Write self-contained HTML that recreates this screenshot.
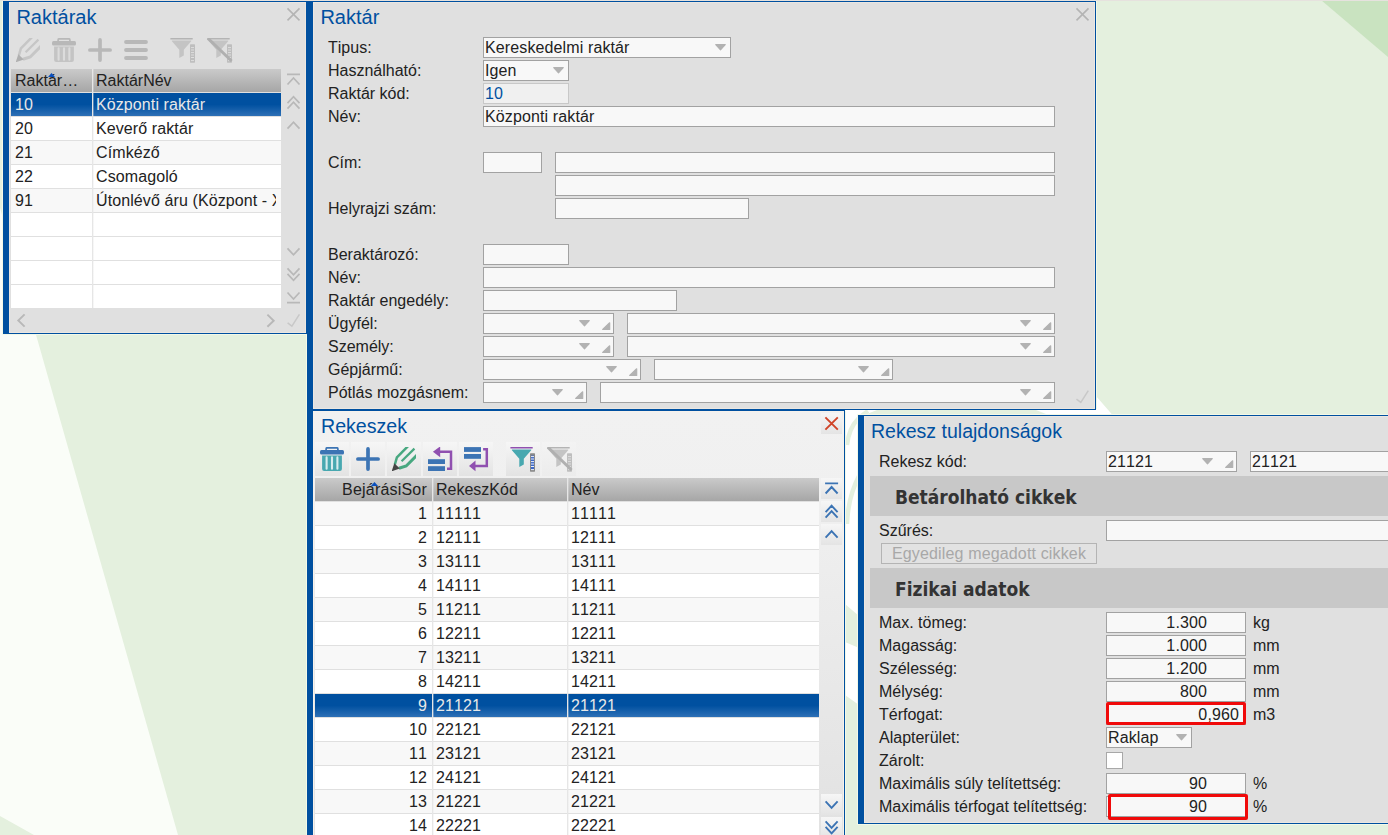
<!DOCTYPE html><html lang="hu"><head><meta charset="utf-8"><title>Raktárak</title><style>
*{box-sizing:border-box;margin:0;padding:0}
html,body{width:1388px;height:835px;overflow:hidden}
body{position:relative;background:#e4f0de;font-family:"Liberation Sans",sans-serif;font-size:16px;color:#222;font-kerning:none;font-feature-settings:"kern" 0,"liga" 0}
.abs{position:absolute}
.panel{position:absolute;background:#e0e0e0;border-left:6px solid #0050a0;border-top:1px solid #0050a0;border-right:1px solid #0050a0;border-bottom:1px solid #0050a0;overflow:hidden}
.panel{box-shadow:inset 0 0 0 1px #ebe7e2}
.panel.act{background:linear-gradient(#f1f1f1,#f0f0f0 20%,#e2e2e2 96%);box-shadow:inset 0 0 0 1px #f7f2ec}
.title{position:absolute;color:#0050a0;font-size:20px;white-space:nowrap;line-height:22px;transform-origin:0 0}
.lbl{position:absolute;white-space:nowrap;line-height:21px;height:21px;font-size:16px;color:#222;font-kerning:none;font-feature-settings:"kern" 0,"liga" 0}
.fld{position:absolute;height:21px;border:1px solid #a2a2a2;background:#f8f8f8;line-height:19px;font-size:16px;padding-left:1px;letter-spacing:.12px;white-space:nowrap;overflow:hidden;color:#222}
.fld.ro{background:#f0f0f0;border-color:#c8c8c8;color:#0050a0}
.fld.num{text-align:right;padding-right:4px}
.fld svg{left:auto;overflow:visible}
.grid{position:absolute;overflow:hidden;background:#fff}
.gh{position:absolute;top:0;height:23px;background:linear-gradient(#cacaca,#a6a6a6);line-height:24px;font-size:16px;white-space:nowrap;overflow:hidden;color:#222}
.row{position:absolute;left:0;right:0;height:24px;border-top:1px solid #e0e0e0;background:#fff}
.row.alt{background:#f8f8f8}
.row.sel{background:linear-gradient(#0050a0 50%,#2e70b6);color:#e8e8e8}
.cell{position:absolute;top:0;height:23px;line-height:23px;white-space:nowrap;overflow:hidden;font-size:16px;letter-spacing:.1px}
.vsep{position:absolute;top:0;bottom:0;width:2px;background:linear-gradient(to right,#e6e6e6 50%,rgba(230,230,230,.35) 50%)}
.tb{position:absolute;width:34px;height:34px;background:linear-gradient(#f6f6f6,#e3e3e3)}
.sec{position:absolute;background:#c8c8c8;height:40px;overflow:hidden;font-family:"DejaVu Sans Condensed","DejaVu Sans","Liberation Sans",sans-serif;font-stretch:condensed;font-weight:bold;font-size:19px;line-height:43px;padding-left:25px;color:#333;white-space:nowrap}
svg{position:absolute;overflow:visible}
</style></head><body>
<svg class="abs" style="left:0;top:0" width="1388" height="835" viewBox="0 0 1388 835"><rect width="1388" height="835" fill="#e4f0de"/><polygon points="-59,0 178,835 34,835 0,816 0,0" fill="#fafdf8"/><polygon points="1321,0 1388,0 1388,57" fill="#c9e3c0"/><polygon points="845,410 1096,410 1096,396 1112.5,415 859,415 859,705 845,695" fill="#fff"/><polygon points="862,416 877,410 1036,410 1051,416" fill="#e4f0de"/><path d="M847,445 Q849,428 858,419 Q862,415 868,411" stroke="#e4f0de" stroke-width="4.5" fill="none"/><path d="M847,524 Q848,496 860,474" stroke="#e4f0de" stroke-width="4.5" fill="none"/><polygon points="845,604 859,616 859,648 845,642" fill="#e4f0de"/><path d="M2.5,1 V334.5 H306.5 V835 M1096.5,1 V409 M845.5,411 V835 M1388,414.5 H857.5 V824.5 H1388" fill="none" stroke="#f3f9e8" stroke-width="1"/><rect x="0" y="0" width="1388" height="1" fill="#e6e2de"/></svg>
<div class="panel" style="left:3px;top:1px;width:304px;height:333px">
<div class="title" style="left:7.4px;top:4px">Raktárak</div>
<svg style="left:0;top:0" width="10" height="10"><path d="M278.5,6.4 L290.5,18.4 M290.5,6.4 L278.5,18.4" stroke="#b4b4b4" stroke-width="1.6"/></svg>
<svg style="left:7px;top:36px;overflow:hidden" width="24" height="24" viewBox="0 0 24 24"><path d="M16.6,-1.4 L4.9,10.3 L2.8,17.6" fill="none" stroke="#c6c6c6" stroke-width="2.5"/><path d="M22.4,1.6 L9.6,14.3" stroke="#c6c6c6" stroke-width="2.2"/><path d="M26,7.2 L14.2,19 L7,21.2" fill="none" stroke="#c6c6c6" stroke-width="3"/><polygon points="2.3,16.2 7.8,21.6 -0.3,24.3" fill="#b0b0b0"/></svg>
<svg style="left:43px;top:36px;overflow:hidden" width="24" height="24" viewBox="0 0 24 24"><path d="M6.1,4 V1.9 Q6.1,0.8 7.2,0.8 H16.8 Q17.9,0.8 17.9,1.9 V4" fill="none" stroke="#b8b8b8" stroke-width="1.7"/><rect x="0" y="3.1" width="24" height="4.4" rx="1.5" fill="#b8b8b8"/><path d="M2.1,8.4 H21.9 V22 Q21.9,24 19.9,24 H4.1 Q2.1,24 2.1,22 Z" fill="#c4c4c4"/><path d="M6.6,10.4 V21.8 M12,10.4 V21.8 M17.4,10.4 V21.8" stroke="#dcdcdc" stroke-width="2.1" stroke-linecap="round"/></svg>
<svg style="left:79px;top:36px;overflow:hidden" width="24" height="24" viewBox="0 0 24 24"><path d="M12,1.9 V22.1 M1.9,12 H22.1" stroke="#b8b8b8" stroke-width="3.7" stroke-linecap="round"/></svg>
<svg style="left:115px;top:36px;overflow:hidden" width="24" height="24" viewBox="0 0 24 24"><path d="M2,4 H22 M2,12 H22 M2,20 H22" stroke="#b8b8b8" stroke-width="3.8" stroke-linecap="round"/></svg>
<svg style="left:161px;top:36px;overflow:hidden" width="26" height="26" viewBox="0 0 26 26"><rect x="0.4" y="-0.2" width="22.3" height="1.7" fill="#b4b4b4"/><path d="M1.7,3 Q1.5,2.4 2.4,2.4 H20.8 Q21.7,2.4 21.4,3 L13.8,11.8 V17.6 L9.3,19.9 V11.8 Z" fill="#c4c4c4"/><rect x="20" y="6.3" width="5" height="18.4" rx="0.6" fill="#bebebe"/><path d="M21,9.6 h3 M21,12 h3 M21,14.6 h3 M21,17 h3 M21,19.5 h3 M21,22.6 h3" stroke="#e2e2e2" stroke-width="0.9"/></svg>
<svg style="left:197.5px;top:36px;overflow:hidden" width="26" height="26" viewBox="0 0 26 26"><rect x="0.4" y="-0.2" width="22.3" height="1.7" fill="#b4b4b4"/><path d="M1.7,3 Q1.5,2.4 2.4,2.4 H20.8 Q21.7,2.4 21.4,3 L13.8,11.8 V17.6 L9.3,19.9 V11.8 Z" fill="#c4c4c4"/><rect x="20" y="6.3" width="5" height="18.4" rx="0.6" fill="#bebebe"/><path d="M21,9.6 h3 M21,12 h3 M21,14.6 h3 M21,17 h3 M21,19.5 h3 M21,22.6 h3" stroke="#e2e2e2" stroke-width="0.9"/><path d="M0.8,0.2 L24.6,23" stroke="#b0b0b0" stroke-width="3"/></svg>
<div class="grid" style="left:2px;top:67px;width:270px;height:239px">
<div class="gh" style="left:0;width:81px;padding-left:4px">Raktár…</div>
<div class="gh" style="left:81px;width:189px;padding-left:4px">RaktárNév</div>
<svg style="left:37px;top:4px" width="7" height="4"><polygon points="0,4 3.5,0 7,4" fill="#0a50c0"/></svg>
<div class="row sel" style="top:23px"><div class="cell" style="left:4px;width:76px">10</div><div class="cell" style="left:85px;width:180px">Központi raktár</div></div>
<div class="row" style="top:47px"><div class="cell" style="left:4px;width:76px">20</div><div class="cell" style="left:85px;width:180px">Keverő raktár</div></div>
<div class="row alt" style="top:71px"><div class="cell" style="left:4px;width:76px">21</div><div class="cell" style="left:85px;width:180px">Címkéző</div></div>
<div class="row" style="top:95px"><div class="cell" style="left:4px;width:76px">22</div><div class="cell" style="left:85px;width:180px">Csomagoló</div></div>
<div class="row alt" style="top:119px"><div class="cell" style="left:4px;width:76px">91</div><div class="cell" style="left:85px;width:180px">Útonlévő áru (Központ - X</div></div>
<div class="row" style="top:143px"><div class="cell" style="left:4px;width:76px"></div><div class="cell" style="left:85px;width:180px"></div></div>
<div class="row" style="top:167px"><div class="cell" style="left:4px;width:76px"></div><div class="cell" style="left:85px;width:180px"></div></div>
<div class="row" style="top:191px"><div class="cell" style="left:4px;width:76px"></div><div class="cell" style="left:85px;width:180px"></div></div>
<div class="row" style="top:215px"><div class="cell" style="left:4px;width:76px"></div><div class="cell" style="left:85px;width:180px"></div></div>
<div class="vsep" style="left:81px;top:0"></div>
</div>
<svg style="left:0;top:0" width="10" height="10"><path d="M278,72.4 H291 M278.5,82.5 L284.5,76 L290.5,82.5 M278.5,101.2 L284.5,94.7 L290.5,101.2 M278.5,106.7 L284.5,100.2 L290.5,106.7 M278.5,126.7 L284.5,120.2 L290.5,126.7 M278.5,246.3 L284.5,252.8 L290.5,246.3 M278.5,266.3 L284.5,272.8 L290.5,266.3 M278.5,271.8 L284.5,278.3 L290.5,271.8 M278.5,290.5 L284.5,297 L290.5,290.5 M278,300.6 H291 " fill="none" stroke="#b8b8b8" stroke-width="1.7"/></svg>
<svg style="left:0;top:0" width="10" height="10"><path d="M278.6,320.9 L282.9,324.2 L290.4,312.4" fill="none" stroke="#c8c8c8" stroke-width="1.5"/></svg>
<svg style="left:0;top:0" width="10" height="10"><path d="M15.6,312.4 l-6.3,6.1 l6.3,6.1 M258.4,312.6 l6.3,6.1 l-6.3,6.1" fill="none" stroke="#b8b8b8" stroke-width="1.9"/></svg>
</div>
<div class="panel" style="left:307px;top:1px;width:789px;height:409px">
<div class="title" style="left:7.4px;top:4px">Raktár</div>
<svg style="left:0;top:0" width="10" height="10"><path d="M763.5,6.4 L775.5,18.4 M775.5,6.4 L763.5,18.4" stroke="#b4b4b4" stroke-width="1.6"/></svg>
<div class="lbl" style="left:15px;top:35px">Tipus:</div>
<div class="lbl" style="left:15px;top:58px">Használható:</div>
<div class="lbl" style="left:15px;top:81px">Raktár kód:</div>
<div class="lbl" style="left:15px;top:104px">Név:</div>
<div class="lbl" style="left:15px;top:150px">Cím:</div>
<div class="lbl" style="left:15px;top:196px">Helyrajzi szám:</div>
<div class="lbl" style="left:15px;top:242px">Beraktározó:</div>
<div class="lbl" style="left:15px;top:265px">Név:</div>
<div class="lbl" style="left:15px;top:288px">Raktár engedély:</div>
<div class="lbl" style="left:15px;top:311px">Ügyfél:</div>
<div class="lbl" style="left:15px;top:334px">Személy:</div>
<div class="lbl" style="left:15px;top:357px">Gépjármű:</div>
<div class="lbl" style="left:15px;top:380px">Pótlás mozgásnem:</div>
<div class="fld dd" style="left:170px;top:35px;width:248px">Kereskedelmi raktár<svg style="right:4px;top:6.3px" width="11" height="7" viewBox="0 0 11 7"><polygon points="0.7,0.6 10.3,0.6 5.5,5.9" fill="#b2b2b2" stroke="#b2b2b2" stroke-width="1.1" stroke-linejoin="round"/></svg></div>
<div class="fld dd" style="left:170px;top:58px;width:86px">Igen<svg style="right:4px;top:6.3px" width="11" height="7" viewBox="0 0 11 7"><polygon points="0.7,0.6 10.3,0.6 5.5,5.9" fill="#b2b2b2" stroke="#b2b2b2" stroke-width="1.1" stroke-linejoin="round"/></svg></div>
<div class="fld ro" style="left:170px;top:81px;width:86px">10</div>
<div class="fld " style="left:170px;top:104px;width:572px">Központi raktár</div>
<div class="fld " style="left:170px;top:150px;width:59px"></div>
<div class="fld " style="left:242px;top:150px;width:500px"></div>
<div class="fld " style="left:242px;top:173px;width:500px"></div>
<div class="fld " style="left:242px;top:196px;width:194px"></div>
<div class="fld " style="left:170px;top:242px;width:86px"></div>
<div class="fld " style="left:170px;top:265px;width:572px"></div>
<div class="fld " style="left:170px;top:288px;width:194px"></div>
<div class="fld dd dd2" style="left:170px;top:311px;width:131px"><svg style="right:23px;top:6.3px" width="11" height="7" viewBox="0 0 11 7"><polygon points="0.7,0.6 10.3,0.6 5.5,5.9" fill="#b2b2b2" stroke="#b2b2b2" stroke-width="1.1" stroke-linejoin="round"/></svg><svg style="right:3px;top:7.8px" width="8.4" height="8.2" viewBox="0 0 8.4 8.2"><polygon points="0.7,7.5 7.7,7.5 7.7,0.8" fill="#b2b2b2" stroke="#b2b2b2" stroke-width="1.2" stroke-linejoin="round"/></svg></div>
<div class="fld dd dd2" style="left:314px;top:311px;width:428px"><svg style="right:23px;top:6.3px" width="11" height="7" viewBox="0 0 11 7"><polygon points="0.7,0.6 10.3,0.6 5.5,5.9" fill="#b2b2b2" stroke="#b2b2b2" stroke-width="1.1" stroke-linejoin="round"/></svg><svg style="right:3px;top:7.8px" width="8.4" height="8.2" viewBox="0 0 8.4 8.2"><polygon points="0.7,7.5 7.7,7.5 7.7,0.8" fill="#b2b2b2" stroke="#b2b2b2" stroke-width="1.2" stroke-linejoin="round"/></svg></div>
<div class="fld dd dd2" style="left:170px;top:334px;width:131px"><svg style="right:23px;top:6.3px" width="11" height="7" viewBox="0 0 11 7"><polygon points="0.7,0.6 10.3,0.6 5.5,5.9" fill="#b2b2b2" stroke="#b2b2b2" stroke-width="1.1" stroke-linejoin="round"/></svg><svg style="right:3px;top:7.8px" width="8.4" height="8.2" viewBox="0 0 8.4 8.2"><polygon points="0.7,7.5 7.7,7.5 7.7,0.8" fill="#b2b2b2" stroke="#b2b2b2" stroke-width="1.2" stroke-linejoin="round"/></svg></div>
<div class="fld dd dd2" style="left:314px;top:334px;width:428px"><svg style="right:23px;top:6.3px" width="11" height="7" viewBox="0 0 11 7"><polygon points="0.7,0.6 10.3,0.6 5.5,5.9" fill="#b2b2b2" stroke="#b2b2b2" stroke-width="1.1" stroke-linejoin="round"/></svg><svg style="right:3px;top:7.8px" width="8.4" height="8.2" viewBox="0 0 8.4 8.2"><polygon points="0.7,7.5 7.7,7.5 7.7,0.8" fill="#b2b2b2" stroke="#b2b2b2" stroke-width="1.2" stroke-linejoin="round"/></svg></div>
<div class="fld dd dd2" style="left:170px;top:357px;width:158px"><svg style="right:23px;top:6.3px" width="11" height="7" viewBox="0 0 11 7"><polygon points="0.7,0.6 10.3,0.6 5.5,5.9" fill="#b2b2b2" stroke="#b2b2b2" stroke-width="1.1" stroke-linejoin="round"/></svg><svg style="right:3px;top:7.8px" width="8.4" height="8.2" viewBox="0 0 8.4 8.2"><polygon points="0.7,7.5 7.7,7.5 7.7,0.8" fill="#b2b2b2" stroke="#b2b2b2" stroke-width="1.2" stroke-linejoin="round"/></svg></div>
<div class="fld dd dd2" style="left:341px;top:357px;width:239px"><svg style="right:23px;top:6.3px" width="11" height="7" viewBox="0 0 11 7"><polygon points="0.7,0.6 10.3,0.6 5.5,5.9" fill="#b2b2b2" stroke="#b2b2b2" stroke-width="1.1" stroke-linejoin="round"/></svg><svg style="right:3px;top:7.8px" width="8.4" height="8.2" viewBox="0 0 8.4 8.2"><polygon points="0.7,7.5 7.7,7.5 7.7,0.8" fill="#b2b2b2" stroke="#b2b2b2" stroke-width="1.2" stroke-linejoin="round"/></svg></div>
<div class="fld dd dd2" style="left:170px;top:380px;width:104px"><svg style="right:23px;top:6.3px" width="11" height="7" viewBox="0 0 11 7"><polygon points="0.7,0.6 10.3,0.6 5.5,5.9" fill="#b2b2b2" stroke="#b2b2b2" stroke-width="1.1" stroke-linejoin="round"/></svg><svg style="right:3px;top:7.8px" width="8.4" height="8.2" viewBox="0 0 8.4 8.2"><polygon points="0.7,7.5 7.7,7.5 7.7,0.8" fill="#b2b2b2" stroke="#b2b2b2" stroke-width="1.2" stroke-linejoin="round"/></svg></div>
<div class="fld dd dd2" style="left:287px;top:380px;width:455px"><svg style="right:23px;top:6.3px" width="11" height="7" viewBox="0 0 11 7"><polygon points="0.7,0.6 10.3,0.6 5.5,5.9" fill="#b2b2b2" stroke="#b2b2b2" stroke-width="1.1" stroke-linejoin="round"/></svg><svg style="right:3px;top:7.8px" width="8.4" height="8.2" viewBox="0 0 8.4 8.2"><polygon points="0.7,7.5 7.7,7.5 7.7,0.8" fill="#b2b2b2" stroke="#b2b2b2" stroke-width="1.2" stroke-linejoin="round"/></svg></div>
<svg style="left:0;top:0" width="10" height="10"><path d="M763.5,397.1 L767.8,400.4 L775.3,388.6" fill="none" stroke="#c8c8c8" stroke-width="1.5"/></svg>
</div>
<div class="panel act" style="left:307px;top:410px;width:538px;height:440px">
<div class="title" style="left:7.6px;top:4px;transform:scaleX(.98)">Rekeszek</div>
<div class="abs" style="left:508px;top:2px;width:21px;height:21px;background:linear-gradient(#f6f6f6,#e4e4e4)"></div>
<svg style="left:0;top:0" width="10" height="10"><path d="M512.4,6.3 L524.8,18.7 M524.8,6.3 L512.4,18.7" stroke="#d04428" stroke-width="1.9"/></svg>
<div class="tb" style="left:2px;top:31px"></div>
<div class="tb" style="left:38px;top:31px"></div>
<div class="tb" style="left:74px;top:31px"></div>
<div class="tb" style="left:110px;top:31px"></div>
<div class="tb" style="left:146px;top:31px"></div>
<div class="tb" style="left:193px;top:31px"></div>
<div class="tb" style="left:229px;top:31px;background:linear-gradient(#f3f3f3,#ececec)"></div>
<svg style="left:7px;top:36px;overflow:hidden" width="24" height="24" viewBox="0 0 24 24"><path d="M6.1,4 V1.9 Q6.1,0.8 7.2,0.8 H16.8 Q17.9,0.8 17.9,1.9 V4" fill="none" stroke="#3c74b4" stroke-width="1.7"/><rect x="0" y="3.1" width="24" height="4.4" rx="1.5" fill="#3c74b4"/><path d="M2.1,8.4 H21.9 V22 Q21.9,24 19.9,24 H4.1 Q2.1,24 2.1,22 Z" fill="#48a8b0"/><path d="M6.6,10.4 V21.8 M12,10.4 V21.8 M17.4,10.4 V21.8" stroke="#d8ecee" stroke-width="2.1" stroke-linecap="round"/></svg>
<svg style="left:43px;top:36px;overflow:hidden" width="24" height="24" viewBox="0 0 24 24"><path d="M12,1.9 V22.1 M1.9,12 H22.1" stroke="#3c74b4" stroke-width="3.7" stroke-linecap="round"/></svg>
<svg style="left:79px;top:36px;overflow:hidden" width="24" height="24" viewBox="0 0 24 24"><path d="M16.6,-1.4 L4.9,10.3 L2.8,17.6" fill="none" stroke="#48a880" stroke-width="2.5"/><path d="M22.4,1.6 L9.6,14.3" stroke="#48a880" stroke-width="2.2"/><path d="M26,7.2 L14.2,19 L7,21.2" fill="none" stroke="#48a880" stroke-width="3"/><polygon points="2.3,16.2 7.8,21.6 -0.3,24.3" fill="#444"/></svg>
<svg style="left:115px;top:36px;overflow:hidden" width="25" height="25" viewBox="0 0 25 25"><rect x="0" y="12.2" width="17" height="4.8" fill="#3c74b4"/><rect x="0" y="19.2" width="17" height="4.8" fill="#3c74b4"/><path d="M11.5,4.8 H23 V21.7 H19" fill="none" stroke="#9050b0" stroke-width="2.5"/><polygon points="4.9,4.8 12.2,-0.6 12.2,10.3" fill="#9050b0"/></svg>
<svg style="left:151px;top:36px;overflow:hidden" width="25" height="25" viewBox="0 0 25 25"><rect x="0" y="0.1" width="17" height="4.8" fill="#3c74b4"/><rect x="0" y="7" width="17" height="4.8" fill="#3c74b4"/><path d="M19.1,2.2 H22.8 V18.9 H11" fill="none" stroke="#9050b0" stroke-width="2.5"/><polygon points="5,18.9 11.5,13.5 11.5,24.3" fill="#9050b0"/></svg>
<svg style="left:197px;top:36px;overflow:hidden" width="26" height="26" viewBox="0 0 26 26"><rect x="0.4" y="-0.2" width="22.3" height="1.7" fill="#9050b0"/><path d="M1.7,3 Q1.5,2.4 2.4,2.4 H20.8 Q21.7,2.4 21.4,3 L13.8,11.8 V17.6 L9.3,19.9 V11.8 Z" fill="#48a8b0"/><rect x="20" y="6.3" width="5" height="18.4" rx="0.6" fill="#888"/><rect x="21" y="8.6" width="3" height="14.4" fill="#3c68c8"/><path d="M21,9.6 h3 M21,12 h3 M21,14.6 h3 M21,17 h3 M21,19.5 h3 M21,22.6 h3" stroke="#fff" stroke-width="0.9"/></svg>
<svg style="left:233.5px;top:36px;overflow:hidden" width="26" height="26" viewBox="0 0 26 26"><rect x="0.4" y="-0.2" width="22.3" height="1.7" fill="#b4b4b4"/><path d="M1.7,3 Q1.5,2.4 2.4,2.4 H20.8 Q21.7,2.4 21.4,3 L13.8,11.8 V17.6 L9.3,19.9 V11.8 Z" fill="#c4c4c4"/><rect x="20" y="6.3" width="5" height="18.4" rx="0.6" fill="#bebebe"/><path d="M21,9.6 h3 M21,12 h3 M21,14.6 h3 M21,17 h3 M21,19.5 h3 M21,22.6 h3" stroke="#e2e2e2" stroke-width="0.9"/><path d="M0.8,0.2 L24.6,23" stroke="#b0b0b0" stroke-width="3"/></svg>
<div class="grid" style="left:2px;top:67px;width:504px;height:380px">
<div class="gh" style="left:0;width:117px;text-align:right;padding-right:5px;letter-spacing:.2px">BejárásiSor</div>
<div class="gh" style="left:118px;width:134px;padding-left:3px">RekeszKód</div>
<div class="gh" style="left:253px;width:251px;padding-left:3px">Név</div>
<svg style="left:55.5px;top:4px" width="7" height="4"><polygon points="0,4 3.5,0 7,4" fill="#0a50c0"/></svg>
<div class="row alt" style="top:23px"><div class="cell" style="left:0;width:112px;text-align:right">1</div><div class="cell" style="left:121px;width:128px">11111</div><div class="cell" style="left:256px;width:240px">11111</div></div>
<div class="row" style="top:47px"><div class="cell" style="left:0;width:112px;text-align:right">2</div><div class="cell" style="left:121px;width:128px">12111</div><div class="cell" style="left:256px;width:240px">12111</div></div>
<div class="row alt" style="top:71px"><div class="cell" style="left:0;width:112px;text-align:right">3</div><div class="cell" style="left:121px;width:128px">13111</div><div class="cell" style="left:256px;width:240px">13111</div></div>
<div class="row" style="top:95px"><div class="cell" style="left:0;width:112px;text-align:right">4</div><div class="cell" style="left:121px;width:128px">14111</div><div class="cell" style="left:256px;width:240px">14111</div></div>
<div class="row alt" style="top:119px"><div class="cell" style="left:0;width:112px;text-align:right">5</div><div class="cell" style="left:121px;width:128px">11211</div><div class="cell" style="left:256px;width:240px">11211</div></div>
<div class="row" style="top:143px"><div class="cell" style="left:0;width:112px;text-align:right">6</div><div class="cell" style="left:121px;width:128px">12211</div><div class="cell" style="left:256px;width:240px">12211</div></div>
<div class="row alt" style="top:167px"><div class="cell" style="left:0;width:112px;text-align:right">7</div><div class="cell" style="left:121px;width:128px">13211</div><div class="cell" style="left:256px;width:240px">13211</div></div>
<div class="row" style="top:191px"><div class="cell" style="left:0;width:112px;text-align:right">8</div><div class="cell" style="left:121px;width:128px">14211</div><div class="cell" style="left:256px;width:240px">14211</div></div>
<div class="row sel" style="top:215px"><div class="cell" style="left:0;width:112px;text-align:right">9</div><div class="cell" style="left:121px;width:128px">21121</div><div class="cell" style="left:256px;width:240px">21121</div></div>
<div class="row" style="top:239px"><div class="cell" style="left:0;width:112px;text-align:right">10</div><div class="cell" style="left:121px;width:128px">22121</div><div class="cell" style="left:256px;width:240px">22121</div></div>
<div class="row alt" style="top:263px"><div class="cell" style="left:0;width:112px;text-align:right">11</div><div class="cell" style="left:121px;width:128px">23121</div><div class="cell" style="left:256px;width:240px">23121</div></div>
<div class="row" style="top:287px"><div class="cell" style="left:0;width:112px;text-align:right">12</div><div class="cell" style="left:121px;width:128px">24121</div><div class="cell" style="left:256px;width:240px">24121</div></div>
<div class="row alt" style="top:311px"><div class="cell" style="left:0;width:112px;text-align:right">13</div><div class="cell" style="left:121px;width:128px">21221</div><div class="cell" style="left:256px;width:240px">21221</div></div>
<div class="row" style="top:335px"><div class="cell" style="left:0;width:112px;text-align:right">14</div><div class="cell" style="left:121px;width:128px">22221</div><div class="cell" style="left:256px;width:240px">22221</div></div>
<div class="vsep" style="left:117px;top:0"></div><div class="vsep" style="left:252px;top:0"></div>
</div>
<div class="abs" style="left:508px;top:67px;width:21px;height:21px;background:linear-gradient(#f6f6f6,#e4e4e4)"></div>
<div class="abs" style="left:508px;top:90px;width:21px;height:21px;background:linear-gradient(#f6f6f6,#e4e4e4)"></div>
<div class="abs" style="left:508px;top:113px;width:21px;height:21px;background:linear-gradient(#f6f6f6,#e4e4e4)"></div>
<div class="abs" style="left:508px;top:383px;width:21px;height:21px;background:linear-gradient(#f6f6f6,#e4e4e4)"></div>
<div class="abs" style="left:508px;top:406px;width:21px;height:21px;background:linear-gradient(#f6f6f6,#e4e4e4)"></div>
<svg style="left:0;top:0" width="10" height="10"><path d="M512.1,72.4 H525.1 M512.6,82.5 L518.6,76 L524.6,82.5 M512.6,101.2 L518.6,94.7 L524.6,101.2 M512.6,106.7 L518.6,100.2 L524.6,106.7 M512.6,126.7 L518.6,120.2 L524.6,126.7 M512.6,390.3 L518.6,396.8 L524.6,390.3 M512.6,410.3 L518.6,416.8 L524.6,410.3 M512.6,415.8 L518.6,422.3 L524.6,415.8 " fill="none" stroke="#3c74b4" stroke-width="1.9"/></svg>
</div>
<div class="panel" style="left:858px;top:415px;width:560px;height:409px">
<div class="title" style="left:7.3px;top:4px;transform:scaleX(.976)">Rekesz tulajdonságok</div>
<div class="lbl" style="left:15px;top:35px">Rekesz kód:</div>
<div class="fld dd dd2" style="left:242px;top:35px;width:131px">21121<svg style="right:23px;top:6.3px" width="11" height="7" viewBox="0 0 11 7"><polygon points="0.7,0.6 10.3,0.6 5.5,5.9" fill="#b2b2b2" stroke="#b2b2b2" stroke-width="1.1" stroke-linejoin="round"/></svg><svg style="right:3px;top:7.8px" width="8.4" height="8.2" viewBox="0 0 8.4 8.2"><polygon points="0.7,7.5 7.7,7.5 7.7,0.8" fill="#b2b2b2" stroke="#b2b2b2" stroke-width="1.2" stroke-linejoin="round"/></svg></div>
<div class="fld " style="left:386px;top:35px;width:200px">21121</div>
<div class="sec" style="left:6px;top:60px;width:540px">Betárolható cikkek</div>
<div class="lbl" style="left:15px;top:104px">Szűrés:</div>
<div class="fld " style="left:242px;top:104px;width:300px"></div>
<div class="abs" style="left:17px;top:127px;width:216px;height:21px;border:1px solid #b4b4b4;background:#e2e2e2;color:#a8a8a8;text-align:center;line-height:19px;white-space:nowrap;letter-spacing:.15px">Egyedileg megadott cikkek</div>
<div class="sec" style="left:6px;top:152px;width:540px">Fizikai adatok</div>
<div class="lbl" style="left:15px;top:196px">Max. tömeg:</div>
<div class="fld" style="left:242px;top:196px;width:140px;text-align:right;padding-right:38px">1.300</div>
<div class="lbl" style="left:389px;top:196px">kg</div>
<div class="lbl" style="left:15px;top:219px">Magasság:</div>
<div class="fld" style="left:242px;top:219px;width:140px;text-align:right;padding-right:38px">1.000</div>
<div class="lbl" style="left:389px;top:219px">mm</div>
<div class="lbl" style="left:15px;top:242px">Szélesség:</div>
<div class="fld" style="left:242px;top:242px;width:140px;text-align:right;padding-right:38px">1.200</div>
<div class="lbl" style="left:389px;top:242px">mm</div>
<div class="lbl" style="left:15px;top:265px">Mélység:</div>
<div class="fld" style="left:242px;top:265px;width:140px;text-align:right;padding-right:38px">800</div>
<div class="lbl" style="left:389px;top:265px">mm</div>
<div class="lbl" style="left:15px;top:288px">Térfogat:</div>
<div class="fld" style="left:242px;top:288px;width:140px;text-align:right;padding-right:6px">0,960</div>
<div class="lbl" style="left:389px;top:288px">m3</div>
<div class="lbl" style="left:15px;top:311px">Alapterület:</div>
<div class="lbl" style="left:15px;top:334px">Zárolt:</div>
<div class="lbl" style="left:15px;top:357px">Maximális súly telítettség:</div>
<div class="fld" style="left:242px;top:357px;width:140px;text-align:right;padding-right:38px">90</div>
<div class="lbl" style="left:389px;top:357px">%</div>
<div class="lbl" style="left:15px;top:380px">Maximális térfogat telítettség:</div>
<div class="fld" style="left:242px;top:380px;width:140px;text-align:right;padding-right:38px">90</div>
<div class="lbl" style="left:389px;top:380px">%</div>
<div class="fld dd" style="left:242px;top:311px;width:86px">Raklap<svg style="right:4px;top:6.3px" width="11" height="7" viewBox="0 0 11 7"><polygon points="0.7,0.6 10.3,0.6 5.5,5.9" fill="#b2b2b2" stroke="#b2b2b2" stroke-width="1.1" stroke-linejoin="round"/></svg></div>
<div class="abs" style="left:242px;top:336px;width:17px;height:17px;border:1px solid #a8a8a8;background:#fff"></div>
<div class="abs" style="left:242px;top:286px;width:140px;height:23px;border:3px solid #f00a0a;border-radius:2px"></div>
<div class="abs" style="left:244px;top:378px;width:140px;height:26px;border:3px solid #f00a0a;border-radius:2px"></div>
</div>
</body></html>
